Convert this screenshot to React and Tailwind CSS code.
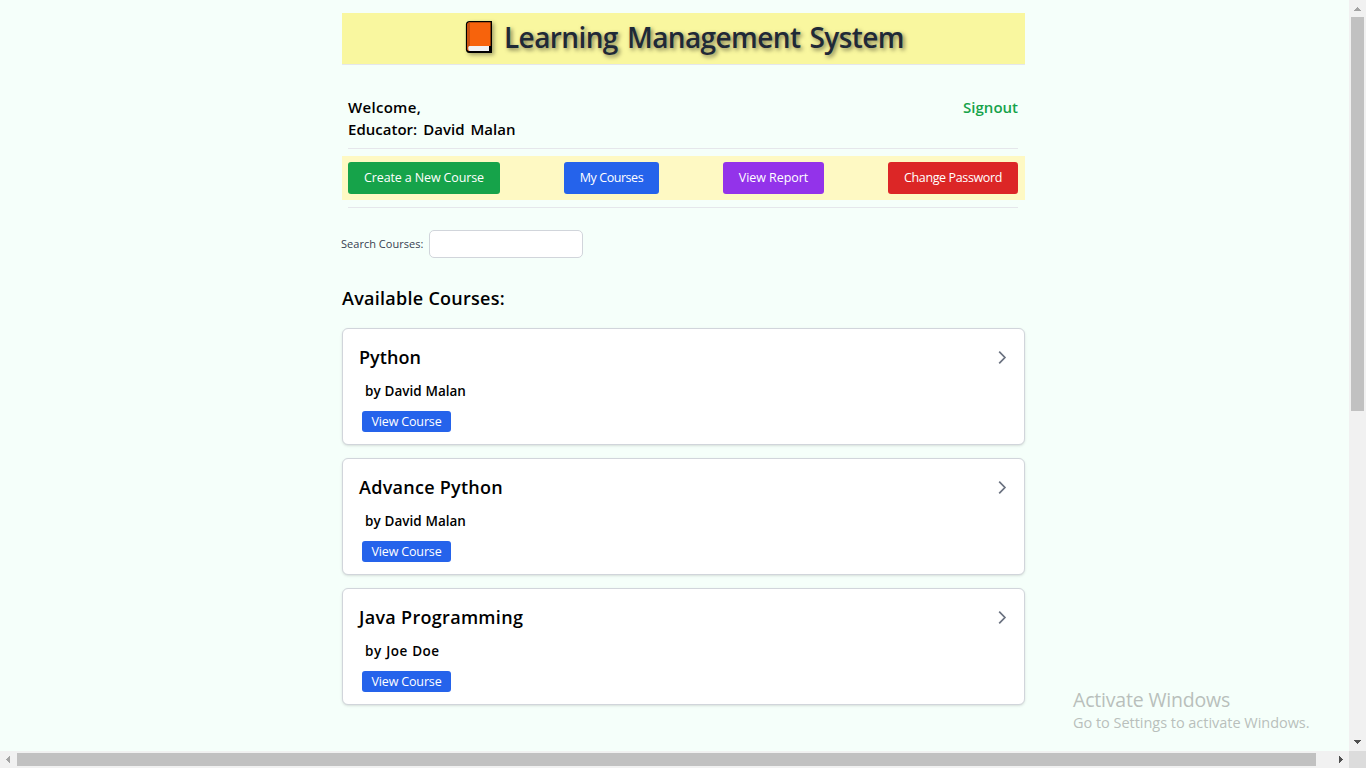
const courses = [
  { title: "Python", author: "by David Malan", titleClass: "tracking-[0.05px]", authorClass: "tracking-[-0.02px] [word-spacing:0.5px]" },
  { title: "Advance Python", author: "by David Malan", titleClass: "tracking-[0.27px]", authorClass: "tracking-[-0.02px] [word-spacing:0.5px]" },
  { title: "Java Programming", author: "by Joe Doe", titleClass: "tracking-[0.3px]", authorClass: "tracking-[0.5px] [word-spacing:0.5px]" },
];

const actions = [
  { label: "Create a New Course", className: "w-[152px] bg-[#16a34a] tracking-[-0.13px]" },
  { label: "My Courses", className: "w-[95px] bg-[#2563eb] tracking-[-0.44px]" },
  { label: "View Report", className: "w-[101px] bg-[#9333ea] tracking-[-0.05px]" },
  { label: "Change Password", className: "w-[130px] bg-[#dc2626] tracking-[-0.37px]" },
];

function BookIcon() {
  return (
    <svg
      width="28"
      height="34"
      viewBox="0 0 28 34"
      className="mb-[3px] shrink-0 drop-shadow-[2px_2px_2px_rgba(0,0,0,0.35)]"
    >
      <path d="M4.5 1H27v32H4.2C2.200 33 0.900 31.500 0.900 29.600V4.500C0.900 2.500 2.300 1 4.500 1Z" fill="#000" />
      <path d="M5 2.300H25.600V26H23.800V31H4.500C3 31 2.100 30 2.100 28.500V4.800C2.200 3.200 3.300 2.300 5 2.300Z" fill="#f7630c" />
      <path d="M5 2.300V26L4 31C2.800 30.700 2.100 29.800 2.100 28.500V4.800C2.200 3.200 3.300 2.300 5 2.300Z" fill="#ca5010" />
      <path d="M5 26H24V31H5C4 31 3.300 30.300 3.300 29V27.500C3.300 26.500 4 26 5 26Z" fill="#f2f2f2" />
    </svg>
  );
}

function CourseCard({ course }) {
  return (
    <article className="flex h-[117px] flex-col items-start rounded-md border border-[#d1d5db] bg-white pl-4 shadow-sm">
      <div className="mt-4 flex h-6 w-full items-center justify-between pr-3">
        <h3 className={`text-[18px] leading-6 font-semibold ${course.titleClass}`}>{course.title}</h3>
        <svg width="20" height="20" viewBox="0 0 20 20" fill="none" stroke="#6b7280" strokeWidth="1.7">
          <path d="M7.200 4.700L12.900 10.500L7.200 16.300" />
        </svg>
      </div>
      <p className={`mt-3 ml-1.5 text-[13.500px] leading-5 font-semibold ${course.authorClass}`}>{course.author}</p>
      <button className="mt-[10px] ml-[3px] h-[21px] w-[89px] rounded-[3px] bg-[#2563eb] text-[12.500px] leading-[21px] tracking-[-0.15px] whitespace-nowrap text-white">
        View Course
      </button>
    </article>
  );
}

export default function App() {
  return (
    <div className="flex h-[768px] w-[1366px] flex-col overflow-hidden bg-[#f5fffa] font-['Open_Sans',sans-serif] text-black">
      <div className="relative flex h-[751px]">
        <main className="ml-[342px] w-[683px]">
          <header className="mt-[13px] flex h-[52px] items-center justify-center gap-[11px] border-b border-[#e5e7eb] bg-[#f9f79f] pl-px">
            <BookIcon />
            <h1 className="mb-[3px] w-[399px] text-[28px] leading-[48px] font-semibold tracking-[-0.6px] whitespace-nowrap text-[#1f2937] [text-shadow:2px_2px_4px_rgba(0,0,0,0.5)] [word-spacing:2.500px]">
              Learning Management System
            </h1>
          </header>
          <section className="mr-[7px] ml-1.5 mt-[31px] flex h-[53px] justify-between border-b border-[#e5e7eb] text-[15px] leading-[22px] font-semibold">
            <div>
              <p className="tracking-[0.3px]">Welcome,</p>
              <p className="tracking-[0.02px] [word-spacing:2px]">Educator: David Malan</p>
            </div>
            <a className="text-[#16a34a]">Signout</a>
          </section>
          <nav className="mt-[7px] flex h-11 items-center justify-between bg-[#fef9c3] pr-[7px] pl-1.5">
            {actions.map((action) => (
              <button
                key={action.label}
                className={`h-8 rounded-[3px] text-[12.500px] whitespace-nowrap text-white ${action.className}`}
              >
                {action.label}
              </button>
            ))}
          </nav>
          <div className="mr-[7px] ml-1.5 mt-[7px] h-px bg-[#e5e7eb]" />
          <div className="-ml-px mt-[22px] flex h-7 items-center">
            <label htmlFor="search" className="w-[88px] text-[11px] font-medium tracking-[0.02px] whitespace-nowrap text-[#374151]">
              Search Courses:
            </label>
            <input id="search" className="h-7 w-[154px] rounded-[5px] border border-[#d1d5db] bg-white" />
          </div>
          <h2 className="mt-[27px] text-[18px] leading-[26px] font-semibold tracking-[0.27px]">Available Courses:</h2>
          <div className="mt-[17px] flex flex-col gap-[13px]">
            {courses.map((course) => (
              <CourseCard key={course.title} course={course} />
            ))}
          </div>
        </main>
        <aside className="absolute top-[688px] left-[1073px] whitespace-nowrap text-[#b9bfbc]">
          <p className="text-[19.500px] leading-6 tracking-[-0.19px]">Activate Windows</p>
          <p className="text-[14.500px] leading-[22px] tracking-[-0.03px]">Go to Settings to activate Windows.</p>
        </aside>
        <div className="ml-auto flex w-[17px] flex-col items-center bg-[#f1f1f1]">
          <svg width="17" height="17" viewBox="0 0 17 17" shapeRendering="crispEdges">
            <path d="M8 7H9V8H10V9H11V10H12V11H5V10H6V9H7V8H8Z" fill="#a3a3a3" />
          </svg>
          <div className="h-[394px] w-[13px] bg-[#c1c1c1]" />
          <svg className="mt-auto" width="17" height="17" viewBox="0 0 17 17" shapeRendering="crispEdges">
            <path d="M5 6H12V7H11V8H10V9H9V10H8V9H7V8H6V7H5Z" fill="#505050" />
          </svg>
        </div>
      </div>
      <div className="flex h-[17px] items-center bg-[#f1f1f1]">
        <svg width="17" height="17" viewBox="0 0 17 17" shapeRendering="crispEdges">
          <path d="M6 8H7V7H8V6H9V5H10V12H9V11H8V10H7V9H6Z" fill="#a3a3a3" />
        </svg>
        <div className="h-[13px] w-[1299px] bg-[#c1c1c1]" />
        <svg className="ml-4" width="17" height="17" viewBox="0 0 17 17" shapeRendering="crispEdges">
          <path d="M7 5H8V6H9V7H10V8H11V9H10V10H9V11H8V12H7Z" fill="#505050" />
        </svg>
        <div className="ml-auto h-[17px] w-[17px] bg-[#dcdcdc]" />
      </div>
    </div>
  );
}
